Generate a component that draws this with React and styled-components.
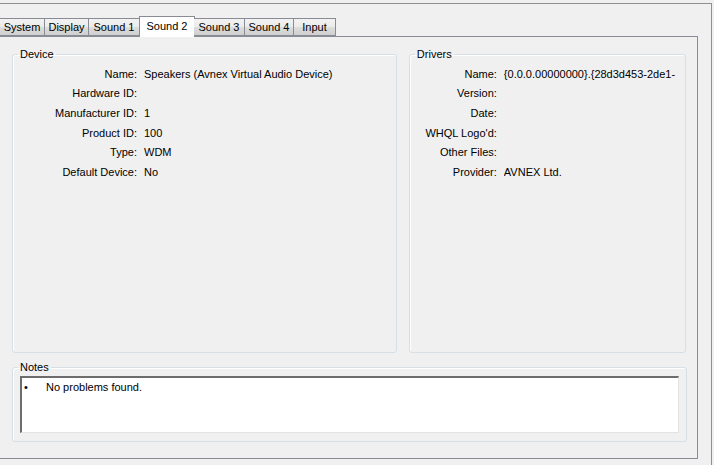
import React from 'react'
import styled, { createGlobalStyle } from 'styled-components'

const GlobalStyle = createGlobalStyle`
  html, body {
    margin: 0;
    padding: 0;
    background: #f0f0f0;
    overflow: hidden;
  }
  body {
    font-family: "Liberation Sans", Arial, sans-serif;
    font-size: 11px;
    color: #000;
  }
`

const tabs = ['System', 'Display', 'Sound 1', 'Sound 2', 'Sound 3', 'Sound 4', 'Input']
const tabWidths = [45, 44, 51, 56, 51, 49, 42]

const device = [
  ['Name:', 'Speakers (Avnex Virtual Audio Device)'],
  ['Hardware ID:', ''],
  ['Manufacturer ID:', '1'],
  ['Product ID:', '100'],
  ['Type:', 'WDM'],
  ['Default Device:', 'No'],
]

const drivers = [
  ['Name:', '{0.0.0.00000000}.{28d3d453-2de1-'],
  ['Version:', ''],
  ['Date:', ''],
  ["WHQL Logo'd:", ''],
  ['Other Files:', ''],
  ['Provider:', 'AVNEX Ltd.'],
]

function InfoGroup({ title, rows, labelWidth, width }) {
  return (
    <Group $width={width}>
      <Legend>{title}</Legend>
      <Rows $labelWidth={labelWidth}>
        {rows.map(([label, value]) => (
          <React.Fragment key={label}>
            <Label>{label}</Label>
            <Value>{value}</Value>
          </React.Fragment>
        ))}
      </Rows>
    </Group>
  )
}

function App() {
  return (
    <>
      <GlobalStyle />
      <Frame>
        <TabStrip>
          {tabs.map((t, i) => (
            <Tab key={t} $active={t === 'Sound 2'} $width={tabWidths[i]}>
              {t}
            </Tab>
          ))}
        </TabStrip>
        <Panel>
          <Columns>
            <InfoGroup title="Device" rows={device} labelWidth={124} width={386} />
            <InfoGroup title="Drivers" rows={drivers} labelWidth={87} width={278} />
          </Columns>
          <NotesGroup>
            <NotesLegend>Notes</NotesLegend>
            <NotesBox>
              <Note>
                <Bullet>•</Bullet>
                No problems found.
              </Note>
            </NotesBox>
          </NotesGroup>
        </Panel>
      </Frame>
    </>
  )
}

export default App

const Frame = styled.div`
  margin-top: 3px;
  width: 712px;
  height: 462px;
  border-top: 1px solid #8e8f8f;
  border-right: 1px solid #8e8f8f;
  padding-top: 12px;
  box-sizing: border-box;
`

const TabStrip = styled.div`
  display: flex;
  align-items: flex-end;
  height: 20px;
  position: relative;
  z-index: 1;
`

const Tab = styled.div`
  box-sizing: border-box;
  width: ${p => p.$width}px;
  height: ${p => (p.$active ? 21 : 18)}px;
  margin-bottom: ${p => (p.$active ? -1 : 0)}px;
  padding-top: ${p => (p.$active ? 3 : 2)}px;
  margin-left: ${p => (p.$active ? -1 : 0)}px;
  margin-right: ${p => (p.$active ? -1 : 0)}px;
  text-align: center;
  border: 1px solid #898c95;
  border-bottom: ${p => (p.$active ? 'none' : '1px solid #898c95')};
  border-left-width: ${p => (p.$active ? 1 : 0)}px;
  background: ${p =>
    p.$active ? '#ffffff' : 'linear-gradient(#f2f2f2 0%, #ebebeb 50%, #dddddd 51%, #cfcfcf 100%)'};
  white-space: nowrap;
  &:first-child {
    border-left-width: 0;
  }
`

const Panel = styled.div`
  box-sizing: border-box;
  margin-left: -2px;
  width: 700px;
  height: 423px;
  border: 1px solid #898c95;
  background: #f0f0f0;
  padding: 10px 11px 0 13px;
  display: flex;
  flex-direction: column;
  gap: 7px;
`

const Columns = styled.div`
  display: flex;
  gap: 12px;
`

const Group = styled.fieldset`
  box-sizing: border-box;
  width: ${p => p.$width}px;
  height: 306px;
  margin: 0;
  padding: 3px 0 0 0;
  border: 1px solid #d5dfe5;
  border-radius: 3px;
  box-shadow: inset 1px 1px 0 #ffffff;
`

const Legend = styled.legend`
  padding: 0 2px;
  margin-left: 5px;
  line-height: 14px;
`

const NotesLegend = styled(Legend)`
  margin-left: -2px;
`

const Rows = styled.div`
  display: grid;
  grid-template-columns: ${p => p.$labelWidth}px 1fr;
  grid-auto-rows: 19.6px;
  column-gap: 7px;
  align-items: center;
`

const Label = styled.div`
  text-align: right;
  white-space: nowrap;
`

const Value = styled.div`
  white-space: nowrap;
  overflow: hidden;
`

const NotesGroup = styled.fieldset`
  box-sizing: border-box;
  width: 675px;
  height: 82px;
  margin: 0;
  padding: 2px 7px 0 7px;
  border: 1px solid #d5dfe5;
  border-radius: 3px;
  box-shadow: inset 1px 1px 0 #ffffff;
`

const NotesBox = styled.div`
  box-sizing: border-box;
  height: 57px;
  background: #ffffff;
  border-top: 2px solid #6d6d6d;
  border-left: 2px solid #6d6d6d;
  border-right: 1px solid #e3e3e3;
  border-bottom: 1px solid #e3e3e3;
  padding: 2px 0 0 2px;
`

const Note = styled.div`
  display: flex;
  line-height: 14px;
`

const Bullet = styled.span`
  width: 22px;
`
